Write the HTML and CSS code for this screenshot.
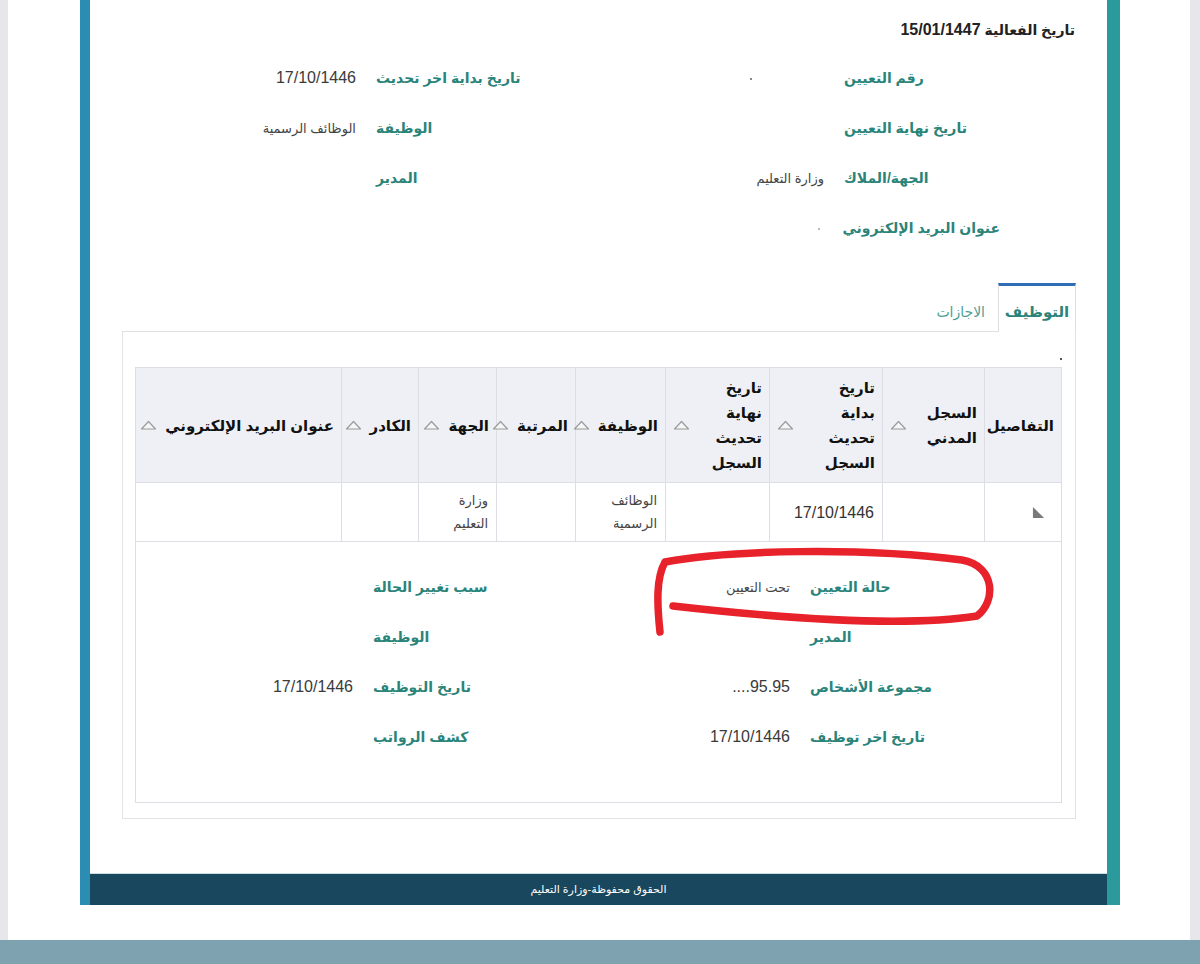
FILE: index.html
```html
<!DOCTYPE html>
<html dir="rtl" lang="ar">
<head>
<meta charset="utf-8">
<title>التوظيف</title>
<link rel="stylesheet" href="styles.css">
</head>
<body>
<div class="screen">
  <div class="sheet">
    <div class="frame">
      <div class="content">
        <div class="title">تاريخ الفعالية <span class="tnum">15/01/1447</span></div>

        <div class="form top-form">
          <div class="lbl">رقم التعيين</div>
          <div class="val"><span class="dot dot-a"></span></div>
          <div class="lbl">تاريخ بداية اخر تحديث</div>
          <div class="val num">17/10/1446</div>

          <div class="lbl">تاريخ نهاية التعيين</div>
          <div class="val"></div>
          <div class="lbl">الوظيفة</div>
          <div class="val">الوظائف الرسمية</div>

          <div class="lbl">الجهة/الملاك</div>
          <div class="val">وزارة التعليم</div>
          <div class="lbl">المدير</div>
          <div class="val"></div>

          <div class="lbl">عنوان البريد الإلكتروني</div>
          <div class="val"><span class="dot dot-b"></span></div>
          <div class="lbl"></div>
          <div class="val"></div>
        </div>

        <div class="tabs">
          <div class="tab active">التوظيف</div>
          <div class="tab">الاجازات</div>
        </div>

        <div class="panel">
          <div class="dotline"><span class="pdot"></span></div>
          <table class="grid">
            <colgroup>
              <col class="c1"><col class="c2"><col class="c3"><col class="c4"><col class="c5">
              <col class="c6"><col class="c7"><col class="c8"><col class="c9">
            </colgroup>
            <thead>
              <tr class="head">
                <th><div class="th-in"><span class="th-t">التفاصيل</span></div></th>
                <th><div class="th-in"><span class="th-t fill">السجل<br>المدني</span><svg class="sort" viewBox="0 0 17 10"><polygon points="1.5,9 8.5,1.5 15.5,9"/></svg></div></th>
                <th><div class="th-in"><span class="th-t fill">تاريخ<br>بداية<br>تحديث<br>السجل</span><svg class="sort" viewBox="0 0 17 10"><polygon points="1.5,9 8.5,1.5 15.5,9"/></svg></div></th>
                <th><div class="th-in"><span class="th-t fill">تاريخ<br>نهاية<br>تحديث<br>السجل</span><svg class="sort" viewBox="0 0 17 10"><polygon points="1.5,9 8.5,1.5 15.5,9"/></svg></div></th>
                <th><div class="th-in"><span class="th-t fill">الوظيفة</span><svg class="sort" viewBox="0 0 17 10"><polygon points="1.5,9 8.5,1.5 15.5,9"/></svg></div></th>
                <th><div class="th-in"><span class="th-t fill">المرتبة</span><svg class="sort" viewBox="0 0 17 10"><polygon points="1.5,9 8.5,1.5 15.5,9"/></svg></div></th>
                <th><div class="th-in"><span class="th-t fill">الجهة</span><svg class="sort" viewBox="0 0 17 10"><polygon points="1.5,9 8.5,1.5 15.5,9"/></svg></div></th>
                <th><div class="th-in"><span class="th-t fill">الكادر</span><svg class="sort" viewBox="0 0 17 10"><polygon points="1.5,9 8.5,1.5 15.5,9"/></svg></div></th>
                <th class="wide"><div class="th-in"><span class="th-t fill nowrap">عنوان البريد الإلكتروني</span><svg class="sort" viewBox="0 0 17 10"><polygon points="1.5,9 8.5,1.5 15.5,9"/></svg></div></th>
              </tr>
            </thead>
            <tbody>
              <tr class="row">
                <td class="disc"><svg class="disc-ic" viewBox="0 0 14 14"><polygon points="1,1 1,13 13,13"/></svg></td>
                <td></td>
                <td class="num">17/10/1446</td>
                <td></td>
                <td>الوظائف<br>الرسمية</td>
                <td></td>
                <td>وزارة<br>التعليم</td>
                <td></td>
                <td></td>
              </tr>
              <tr class="detail">
                <td colspan="9">
                  <div class="form detail-form">
                    <div class="lbl">حالة التعيين</div>
                    <div class="val">تحت التعيين</div>
                    <div class="lbl">سبب تغيير الحالة</div>
                    <div class="val"></div>

                    <div class="lbl">المدير</div>
                    <div class="val"></div>
                    <div class="lbl">الوظيفة</div>
                    <div class="val"></div>

                    <div class="lbl">مجموعة الأشخاص</div>
                    <div class="val num">95.95....</div>
                    <div class="lbl">تاريخ التوظيف</div>
                    <div class="val num">17/10/1446</div>

                    <div class="lbl">تاريخ اخر توظيف</div>
                    <div class="val num">17/10/1446</div>
                    <div class="lbl">كشف الرواتب</div>
                    <div class="val"></div>
                  </div>
                </td>
              </tr>
            </tbody>
          </table>
        </div>
      </div>
      <div class="footer">الحقوق محفوظة-وزارة التعليم</div>
    </div>
  </div>
  <div class="band"></div>

  <svg class="mark" viewBox="0 0 1200 964" width="1200" height="964">
    <path d="M 660 632 C 657 604, 656 578, 665 562 C 730 550, 860 547, 962 560 C 996 566, 996 602, 977 616 C 900 628, 770 617, 673 606"/>
  </svg>
</div>
</body>
</html>
```

FILE: styles.css
```css
* { box-sizing: border-box; }

html, body {
  margin: 0;
  padding: 0;
  background: #ffffff;
}

body {
  font-family: "Liberation Sans", "DejaVu Sans", sans-serif;
  color: #333;
}

.screen {
  position: relative;
  width: 1200px;
  height: 964px;
  display: flex;
  flex-direction: column;
  overflow: hidden;
}

.sheet {
  height: 940px;
  background: #ffffff;
  border-left: 8px solid #e6e6eb;
  border-right: 10px solid #e6e6eb;
  padding-left: 72px;
  padding-right: 70px;
}

.frame {
  height: 905px;
  border-left: 10px solid #2b8db1;
  border-right: 13px solid #2a9a9d;
  display: flex;
  flex-direction: column;
}

.content {
  height: 873px;
  background: #ffffff;
}

.title {
  padding-top: 20px;
  padding-right: 32px;
  height: 40px;
  line-height: 20px;
  font-size: 14px;
  font-weight: bold;
  color: #222;
}

.tnum { font-size: 16px; }

/* form layouts */
.form {
  display: grid;
  grid-auto-rows: 50px;
  align-items: center;
}

.top-form {
  margin: 13px 107px 0 10px;
  grid-template-columns: 176px 284px 184px 256px;
}

.detail-form {
  margin: 0 111px 0 0;
  padding-top: 20px;
  grid-template-columns: 160px 240px 197px 216px;
}

.lbl {
  text-align: left;
  padding-left: 20px;
  font-size: 14px;
  font-weight: bold;
  color: #2b8479;
  white-space: nowrap;
}

.val {
  text-align: right;
  font-size: 13px;
  color: #444;
  white-space: nowrap;
}

.val.num {
  font-size: 16px;
  color: #3a3a3a;
}

.dot {
  display: inline-block;
  width: 2px;
  height: 2px;
  background: #888;
  vertical-align: middle;
}
.dot-a { margin-right: 72px; }
.dot-b { margin-right: 4px; background: #bbb; }

/* tabs */
.tabs {
  margin: 30px 31px 0 32px;
  height: 49px;
  display: flex;
  align-items: flex-end;
  border-bottom: 1px solid #e0e0e0;
}

.tab {
  height: 48px;
  padding: 19px 13px 0;
  line-height: 20px;
  font-size: 14px;
  color: #4d9f96;
}

.tab.active {
  width: 78px;
  height: 49px;
  margin-bottom: -1px;
  padding: 16px 0 0;
  text-align: center;
  background: #ffffff;
  border-top: 3px solid #2f6db7;
  border-left: 1px solid #dedede;
  border-right: 1px solid #dedede;
  font-size: 15px;
  font-weight: bold;
  color: #2b8479;
}

/* panel */
.panel {
  margin: 0 31px 0 32px;
  border: 1px solid #e3e3e3;
  border-top: none;
  padding: 19px 13px 15px;
}

.dotline {
  height: 16px;
  display: flex;
  align-items: center;
}

.pdot {
  width: 2px;
  height: 2px;
  background: #555;
}

/* table */
.grid {
  width: 100%;
  border-collapse: collapse;
  table-layout: fixed;
}

.c1 { width: 77px; }
.c2 { width: 102px; }
.c3 { width: 113px; }
.c4 { width: 104px; }
.c5 { width: 90px; }
.c6 { width: 79px; }
.c7 { width: 78px; }
.c8 { width: 77px; }
.c9 { width: 206px; }

.grid th,
.grid td {
  border: 1px solid #dcdee3;
}

.head th {
  height: 115px;
  background: #eef0f5;
  padding: 0 7px 0 7px;
  vertical-align: middle;
  text-align: right;
}

.head th.wide { padding-left: 11px; }

.th-in {
  display: flex;
  align-items: center;
  gap: 8px;
}

.th-t {
  font-size: 15px;
  font-weight: bold;
  line-height: 25px;
  color: #111;
}

.th-t.fill { flex: 1; }
.nowrap { white-space: nowrap; }

.sort {
  width: 17px;
  height: 10px;
  flex-shrink: 0;
}

.sort polygon {
  fill: #f6f6f8;
  stroke: #9a9a9a;
  stroke-width: 1.2;
  stroke-linejoin: round;
}

.row td {
  height: 59px;
  padding: 0 8px;
  vertical-align: middle;
  text-align: right;
  font-size: 13px;
  line-height: 23px;
  color: #444;
}

.row td.num { font-size: 16px; color: #333; }

.row td.disc { padding-right: 16px; }

.disc-ic {
  display: block;
  width: 13px;
  height: 13px;
}

.disc-ic polygon { fill: #7a7a7a; }

.detail td {
  height: 261px;
  padding: 0;
  vertical-align: top;
}

/* footer */
.footer {
  height: 32px;
  background: #19475d;
  border-top: 1px solid #c9dde3;
  color: #ffffff;
  font-size: 11px;
  line-height: 30px;
  text-align: center;
}

.band {
  height: 24px;
  background: #7fa2b0;
}

/* annotation */
.mark {
  position: absolute;
  left: 0;
  top: 0;
  pointer-events: none;
}

.mark path {
  fill: none;
  stroke: #e8222b;
  stroke-width: 7.5;
  stroke-linecap: round;
  stroke-linejoin: round;
}
```
